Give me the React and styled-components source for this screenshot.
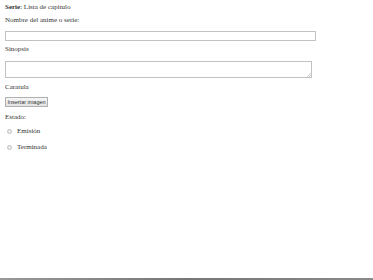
import React from "react";
import styled, { createGlobalStyle } from "styled-components";

const Global = createGlobalStyle`
  html, body { margin: 0; padding: 0; background: #fff; }
  body { font-family: "Liberation Serif", "Times New Roman", serif; color: #333; }
`;

const Page = styled.div`
  min-height: 100vh;
  box-sizing: border-box;
  display: flex;
  flex-direction: column;
`;

const Form = styled.form`
  display: flex;
  flex-direction: column;
  align-items: flex-start;
  padding: 3px 5px 0 5px;
`;

const Text = styled.div`
  font-size: 7px;
  line-height: 8px;
  height: 8px;
  margin-top: ${(p) => p.$gap || 0}px;
  white-space: nowrap;
  b { font-weight: bold; }
`;

const Input = styled.div`
  margin-top: ${(p) => p.$gap || 0}px;
  width: 311px;
  height: 10px;
  box-sizing: border-box;
  border: 1px solid #c2c2c2;
  background: #fff;
`;

const Area = styled.div`
  position: relative;
  margin-top: ${(p) => p.$gap || 0}px;
  width: 307px;
  height: 17px;
  box-sizing: border-box;
  border: 1px solid #c2c2c2;
  background: #fff;
`;

const Grip = styled.svg`
  position: absolute;
  right: 0;
  bottom: 0;
  width: 5px;
  height: 5px;
`;

const Button = styled.div`
  margin-top: ${(p) => p.$gap || 0}px;
  height: 10px;
  width: 43px;
  box-sizing: border-box;
  border: 1px solid #b0b0b0;
  background: linear-gradient(#f6f6f6, #e3e3e3);
  font-family: "Liberation Sans", Arial, sans-serif;
  font-size: 5.5px;
  line-height: 8px;
  color: #333;
  text-align: center;
  white-space: nowrap;
`;

const RadioRow = styled.div`
  display: flex;
  align-items: center;
  gap: 5px;
  margin-top: ${(p) => p.$gap || 0}px;
  padding-left: 2px;
  height: 8px;
  font-size: 7px;
  line-height: 8px;
`;

const Dot = styled.span`
  width: 5px;
  height: 5px;
  border-radius: 50%;
  box-sizing: border-box;
  border: 1px solid #c0c0c0;
  background: radial-gradient(circle, #f4f4f4, #dcdcdc);
`;

const Bottom = styled.div`
  margin-top: auto;
  height: 2px;
  background: linear-gradient(90deg, #999, #777 50%, #8a8a8a);
`;

export default function App() {
  return (
    <Page>
      <Global />
      <Form>
        <Text>
          <b>Serie</b>: Lista de capitulo
        </Text>
        <Text $gap={5}>Nombre del anime o serie:</Text>
        <Input $gap={7} />
        <Text $gap={4}>Sinopsis</Text>
        <Area $gap={8}>
          <Grip viewBox="0 0 5 5">
            <path d="M1 5 L5 1 M3 5 L5 3" stroke="#aaa" strokeWidth="0.6" />
          </Grip>
        </Area>
        <Text $gap={5}>Caratula</Text>
        <Button $gap={6}>Insertar imagen</Button>
        <Text $gap={6}>Estado:</Text>
        <RadioRow $gap={6}>
          <Dot />
          Emisión
        </RadioRow>
        <RadioRow $gap={8}>
          <Dot />
          Terminada
        </RadioRow>
      </Form>
      <Bottom />
    </Page>
  );
}
